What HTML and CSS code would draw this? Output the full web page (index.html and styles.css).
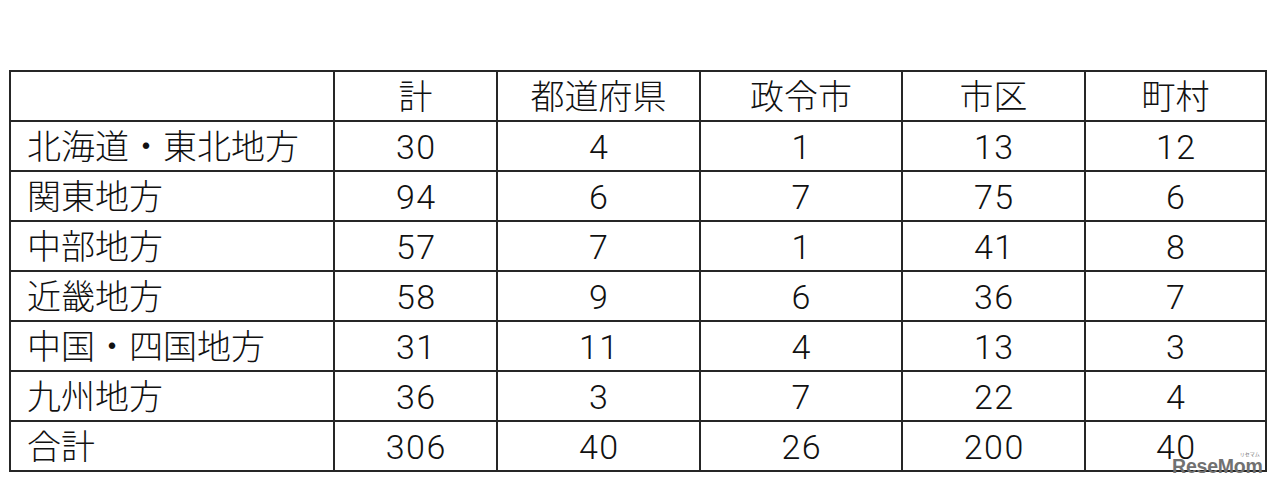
FILE: index.html
```html
<!DOCTYPE html>
<html lang="ja">
<head>
<meta charset="utf-8">
<link rel="stylesheet" href="styles.css">
</head>
<body>
<div class="page">
  <table class="stats">
    <colgroup>
      <col class="c0"><col class="c1"><col class="c2"><col class="c3"><col class="c4"><col class="c5">
    </colgroup>
    <tr><td class="label"></td><td>計</td><td>都道府県</td><td>政令市</td><td>市区</td><td>町村</td></tr>
    <tr><td class="label">北海道・東北地方</td><td class="num">30</td><td class="num">4</td><td class="num">1</td><td class="num">13</td><td class="num">12</td></tr>
    <tr><td class="label">関東地方</td><td class="num">94</td><td class="num">6</td><td class="num">7</td><td class="num">75</td><td class="num">6</td></tr>
    <tr><td class="label">中部地方</td><td class="num">57</td><td class="num">7</td><td class="num">1</td><td class="num">41</td><td class="num">8</td></tr>
    <tr><td class="label">近畿地方</td><td class="num">58</td><td class="num">9</td><td class="num">6</td><td class="num">36</td><td class="num">7</td></tr>
    <tr><td class="label">中国・四国地方</td><td class="num">31</td><td class="num">11</td><td class="num">4</td><td class="num">13</td><td class="num">3</td></tr>
    <tr><td class="label">九州地方</td><td class="num">36</td><td class="num">3</td><td class="num">7</td><td class="num">22</td><td class="num">4</td></tr>
    <tr><td class="label">合計</td><td class="num">306</td><td class="num">40</td><td class="num">26</td><td class="num">200</td><td class="num">40</td></tr>
  </table>
  <div class="watermark"><span class="ruby">リセマム</span>ReseMom</div>
</div>
</body>
</html>
```
FILE: styles.css
```css
html, body {
  margin: 0;
  padding: 0;
  background: #ffffff;
}
.page {
  position: relative;
  width: 1280px;
  height: 490px;
  padding: 70px 0 0 9px;
  box-sizing: border-box;
}
.stats {
  border-collapse: collapse;
  table-layout: fixed;
  width: 1258px;
  font-family: "Roboto", "Noto Sans CJK JP", sans-serif;
  font-weight: 300;
  font-size: 34px;
  color: #111;
}
.c0 { width: 324px; }
.c1 { width: 163px; }
.c2 { width: 203px; }
.c3 { width: 202px; }
.c4 { width: 183px; }
.c5 { width: 181px; }
.stats td {
  border: 2px solid #262626;
  height: 45px;
  padding: 3px 0 0 0;
  text-align: center;
  vertical-align: middle;
  line-height: 45px;
  white-space: nowrap;
}
.stats td.num {
  letter-spacing: 1.5px;
  text-indent: 1.5px;
}
.stats td.label {
  text-align: left;
  padding-left: 16px;
}
.watermark {
  position: absolute;
  left: 1172px;
  top: 455px;
  font-family: "Liberation Sans", sans-serif;
  font-weight: bold;
  font-size: 19.5px;
  letter-spacing: -0.2px;
  color: #717171;
  line-height: 22px;
}
.ruby {
  position: absolute;
  right: 3px;
  top: -4px;
  font-family: "Noto Sans CJK JP", sans-serif;
  font-size: 5px;
  line-height: 6px;
  letter-spacing: 0;
  font-weight: normal;
}
```
